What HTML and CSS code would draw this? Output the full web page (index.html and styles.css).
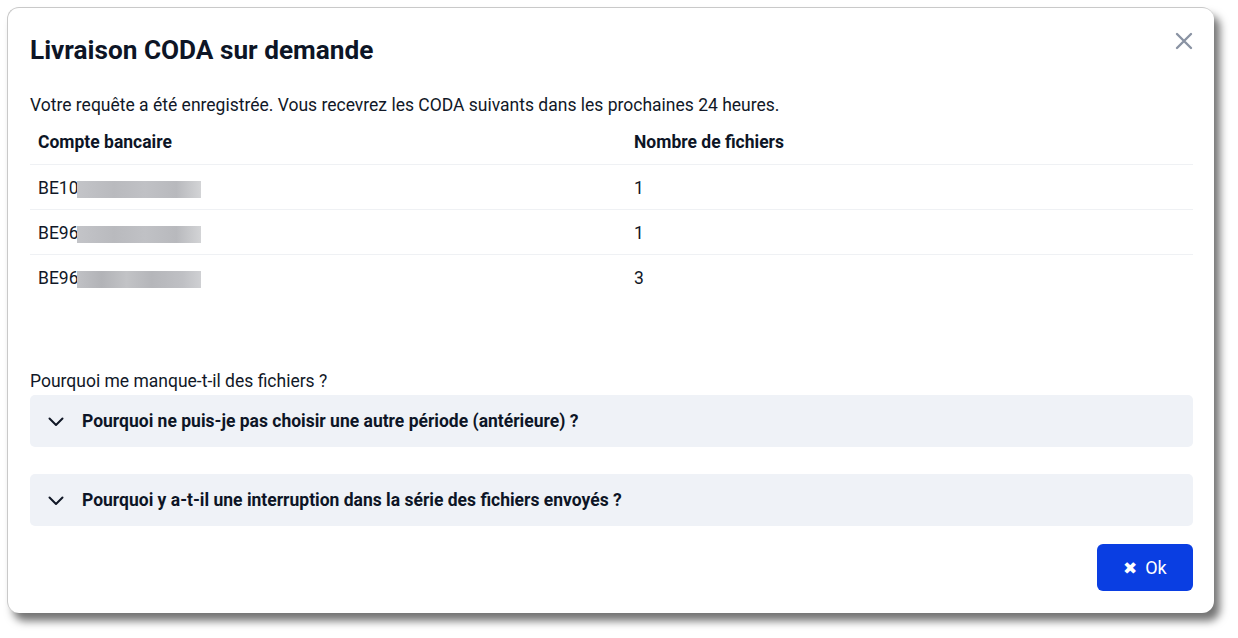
FILE: index.html
```html
<!DOCTYPE html>
<html lang="fr">
<head>
<meta charset="utf-8">
<link rel="stylesheet" href="styles.css">
</head>
<body>
<div class="modal">
  <div class="header">
    <h1 class="title">Livraison CODA sur demande</h1>
    <button class="close" aria-label="Fermer">
      <svg width="18" height="18" viewBox="0 0 18 18"><path d="M2 2 L16 16 M16 2 L2 16" stroke="#8a93a3" stroke-width="2.4" stroke-linecap="round" fill="none"/></svg>
    </button>
  </div>
  <p class="intro">Votre requête a été enregistrée. Vous recevrez les CODA suivants dans les prochaines 24 heures.</p>
  <table class="accounts">
    <thead>
      <tr><th class="col1">Compte bancaire</th><th>Nombre de fichiers</th></tr>
    </thead>
    <tbody>
      <tr><td>BE10<span class="blur"></span></td><td>1</td></tr>
      <tr><td>BE96<span class="blur"></span></td><td>1</td></tr>
      <tr class="last"><td>BE96<span class="blur b3"></span></td><td>3</td></tr>
    </tbody>
  </table>
  <p class="question">Pourquoi me manque-t-il des fichiers ?</p>
  <div class="acc">
    <svg class="chev" width="16" height="10" viewBox="0 0 16 10"><path d="M1.5 1.5 L8 8 L14.5 1.5" stroke="#111827" stroke-width="2" fill="none" stroke-linecap="round" stroke-linejoin="round"/></svg>
    <span>Pourquoi ne puis-je pas choisir une autre période (antérieure) ?</span>
  </div>
  <div class="acc second">
    <svg class="chev" width="16" height="10" viewBox="0 0 16 10"><path d="M1.5 1.5 L8 8 L14.5 1.5" stroke="#111827" stroke-width="2" fill="none" stroke-linecap="round" stroke-linejoin="round"/></svg>
    <span>Pourquoi y a-t-il une interruption dans la série des fichiers envoyés ?</span>
  </div>
  <div class="footer">
    <button class="ok"><span class="x">✖</span>Ok</button>
  </div>
</div>
</body>
</html>
```
FILE: styles.css
```css
html, body {
  margin: 0;
  padding: 0;
  background: #ffffff;
}
body {
  font-family: Roboto, "Liberation Sans", sans-serif;
  color: #111827;
  min-height: 638px;
  padding-top: 7px;
  box-sizing: border-box;
}
.modal {
  box-sizing: border-box;
  margin: 0 0 0 7px;
  width: 1207px;
  height: 606px;
  background: #ffffff;
  border-radius: 12px;
  border-top: 1px solid #c9c9c9;
  border-left: 1px solid #c9c9c9;
  box-shadow: 6px 8px 9px rgba(0, 0, 0, 0.55);
  padding: 27px 21px 0 22px;
  display: flex;
  flex-direction: column;
}
.header {
  display: flex;
  justify-content: space-between;
  align-items: flex-start;
}
.title {
  margin: 0;
  font-size: 26.2px;
  line-height: 30px;
  font-weight: 700;
  color: #0d1526;
}
.close {
  border: none;
  background: none;
  padding: 0;
  margin: -3px 0 0 0;
  cursor: pointer;
  display: flex;
}
.intro {
  margin: 28px 0 3px 0;
  font-size: 17.5px;
  line-height: 24px;
}
.accounts {
  border-collapse: collapse;
  width: 100%;
  font-size: 17.5px;
}
.accounts th, .accounts td {
  text-align: left;
  padding: 10px 8px;
  line-height: 24px;
  height: 24px;
  border-bottom: 1px solid #eff1f4;
}
.accounts th {
  font-weight: 700;
  color: #0d1526;
}
.accounts td {
  padding-top: 11px;
  padding-bottom: 9px;
}
.accounts .col1 {
  width: 580px;
}
.accounts tr.last td {
  border-bottom: none;
}
.blur {
  display: inline-block;
  vertical-align: -4px;
  margin-left: -2px;
  width: 124px;
  height: 17px;
  background: linear-gradient(90deg, #c3c4c8 0%, #b9babe 30%, #c0c1c5 55%, #b8b9bd 80%, #d3d4d6 100%);
}
.b3 {
  background: linear-gradient(90deg, #c0c1c5 0%, #b2b3b7 20%, #c2c3c6 40%, #b5b6ba 60%, #bfc0c4 85%, #cfd0d3 100%);
}
.question {
  margin: 70px 0 2px 0;
  font-size: 17.5px;
  line-height: 24px;
}
.acc {
  height: 52px;
  background: #eff2f7;
  border-radius: 5px;
  display: flex;
  align-items: center;
  font-size: 17.5px;
  font-weight: 700;
  color: #0d1526;
  padding-left: 18px;
}
.acc .chev {
  margin-right: 18px;
  margin-top: 2px;
}
.acc.second {
  margin-top: 27px;
}
.footer {
  display: flex;
  justify-content: flex-end;
  margin-top: 18px;
}
.ok {
  width: 96px;
  height: 47px;
  border: none;
  border-radius: 6px;
  background: #0a3ee2;
  color: #ffffff;
  font-family: Roboto, "Liberation Sans", sans-serif;
  font-size: 18px;
  display: flex;
  align-items: center;
  justify-content: center;
  cursor: pointer;
}
.ok .x {
  font-size: 17px;
  margin-right: 8px;
}
```
